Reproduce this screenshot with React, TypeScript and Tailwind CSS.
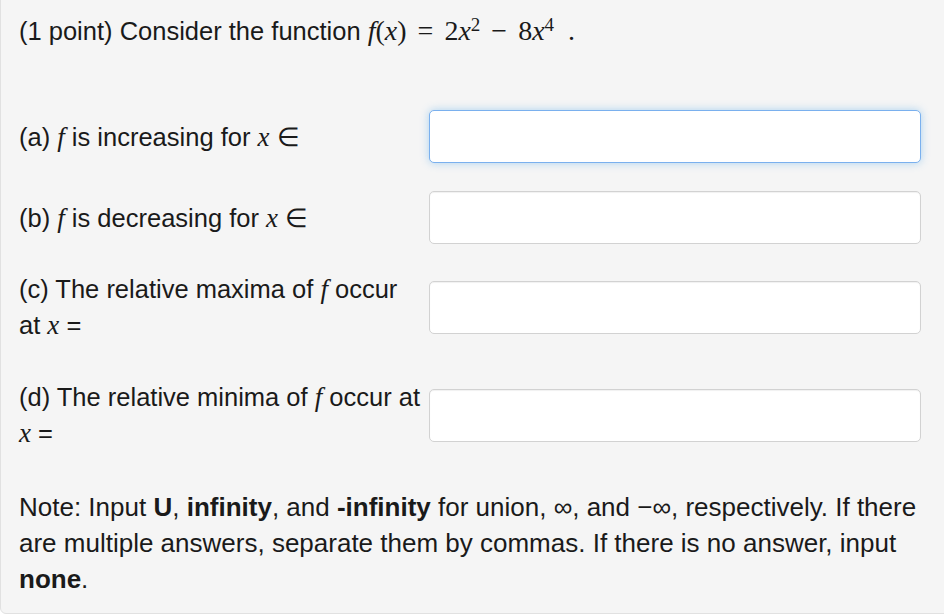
const sans = { fontFamily: '"Liberation Sans", Arial, sans-serif' };

function M({ children }: { children: React.ReactNode }) {
  return <span className="font-['Liberation_Serif',serif] italic text-[27px] leading-none">{children}</span>;
}

function Answer({ focused }: { focused?: boolean }) {
  return (
    <input
      type="text"
      className={
        focused
          ? 'h-[53px] w-[492px] shrink-0 rounded-[5px] border border-[#7ab0ee] bg-white shadow-[0_0_8px_rgba(82,168,236,0.45)] outline-none'
          : 'h-[53px] w-[492px] shrink-0 rounded-[5px] border border-[#d2d2d2] bg-white shadow-[inset_0_1px_1px_rgba(0,0,0,0.06)] outline-none'
      }
    />
  );
}

export default function App() {
  return (
    <div className="min-h-screen overflow-hidden bg-white" style={sans}>
      <div className="-mt-2 w-[1000px] rounded-bl-[6px] border border-[#e1e1e1] bg-[#f5f5f5] pb-[16px] pl-[18px] pt-[20px] text-[25.5px] leading-[36px] text-[#1a1a1a]">
        <p className="whitespace-nowrap">
          (1 point) Consider the function{' '}
          <span className="font-['Liberation_Serif',serif] text-[28px] leading-none">
            <i>f</i>(<i>x</i>)<span className="mx-[11px]">=</span>2<i>x</i>
            <sup className="text-[19px]">2</sup>
            <span className="mx-[11px]">−</span>8<i>x</i>
            <sup className="text-[19px]">4</sup>
            <span className="ml-[14px]">.</span>
          </span>
        </p>

        <div className="mt-[61px] flex items-center">
          <div className="w-[410px]">
            (a) <M>f</M> is increasing for <M>x</M> <span className="font-['Liberation_Serif',serif] leading-none">∈</span>
          </div>
          <Answer focused />
        </div>

        <div className="mt-[28px] flex items-center">
          <div className="w-[410px]">
            (b) <M>f</M> is decreasing for <M>x</M> <span className="font-['Liberation_Serif',serif] leading-none">∈</span>
          </div>
          <Answer />
        </div>

        <div className="mt-[27px] flex items-center">
          <div className="w-[410px]">
            (c) The relative maxima of <M>f</M> occur
            <br />
            at <M>x</M> =
          </div>
          <Answer />
        </div>

        <div className="mt-[36px] flex items-center">
          <div className="w-[410px] whitespace-nowrap">
            (d) The relative minima of <M>f</M> occur at
            <br />
            <M>x</M> =
          </div>
          <Answer />
        </div>

        <p className="mt-[38px] w-[920px] whitespace-nowrap text-[26px]">
          Note: Input <b>U</b>, <b>infinity</b>, and <b>-infinity</b> for union, ∞, and −∞, respectively. If there
          <br />
          are multiple answers, separate them by commas. If there is no answer, input
          <br />
          <b>none</b>.
        </p>
      </div>
    </div>
  );
}
